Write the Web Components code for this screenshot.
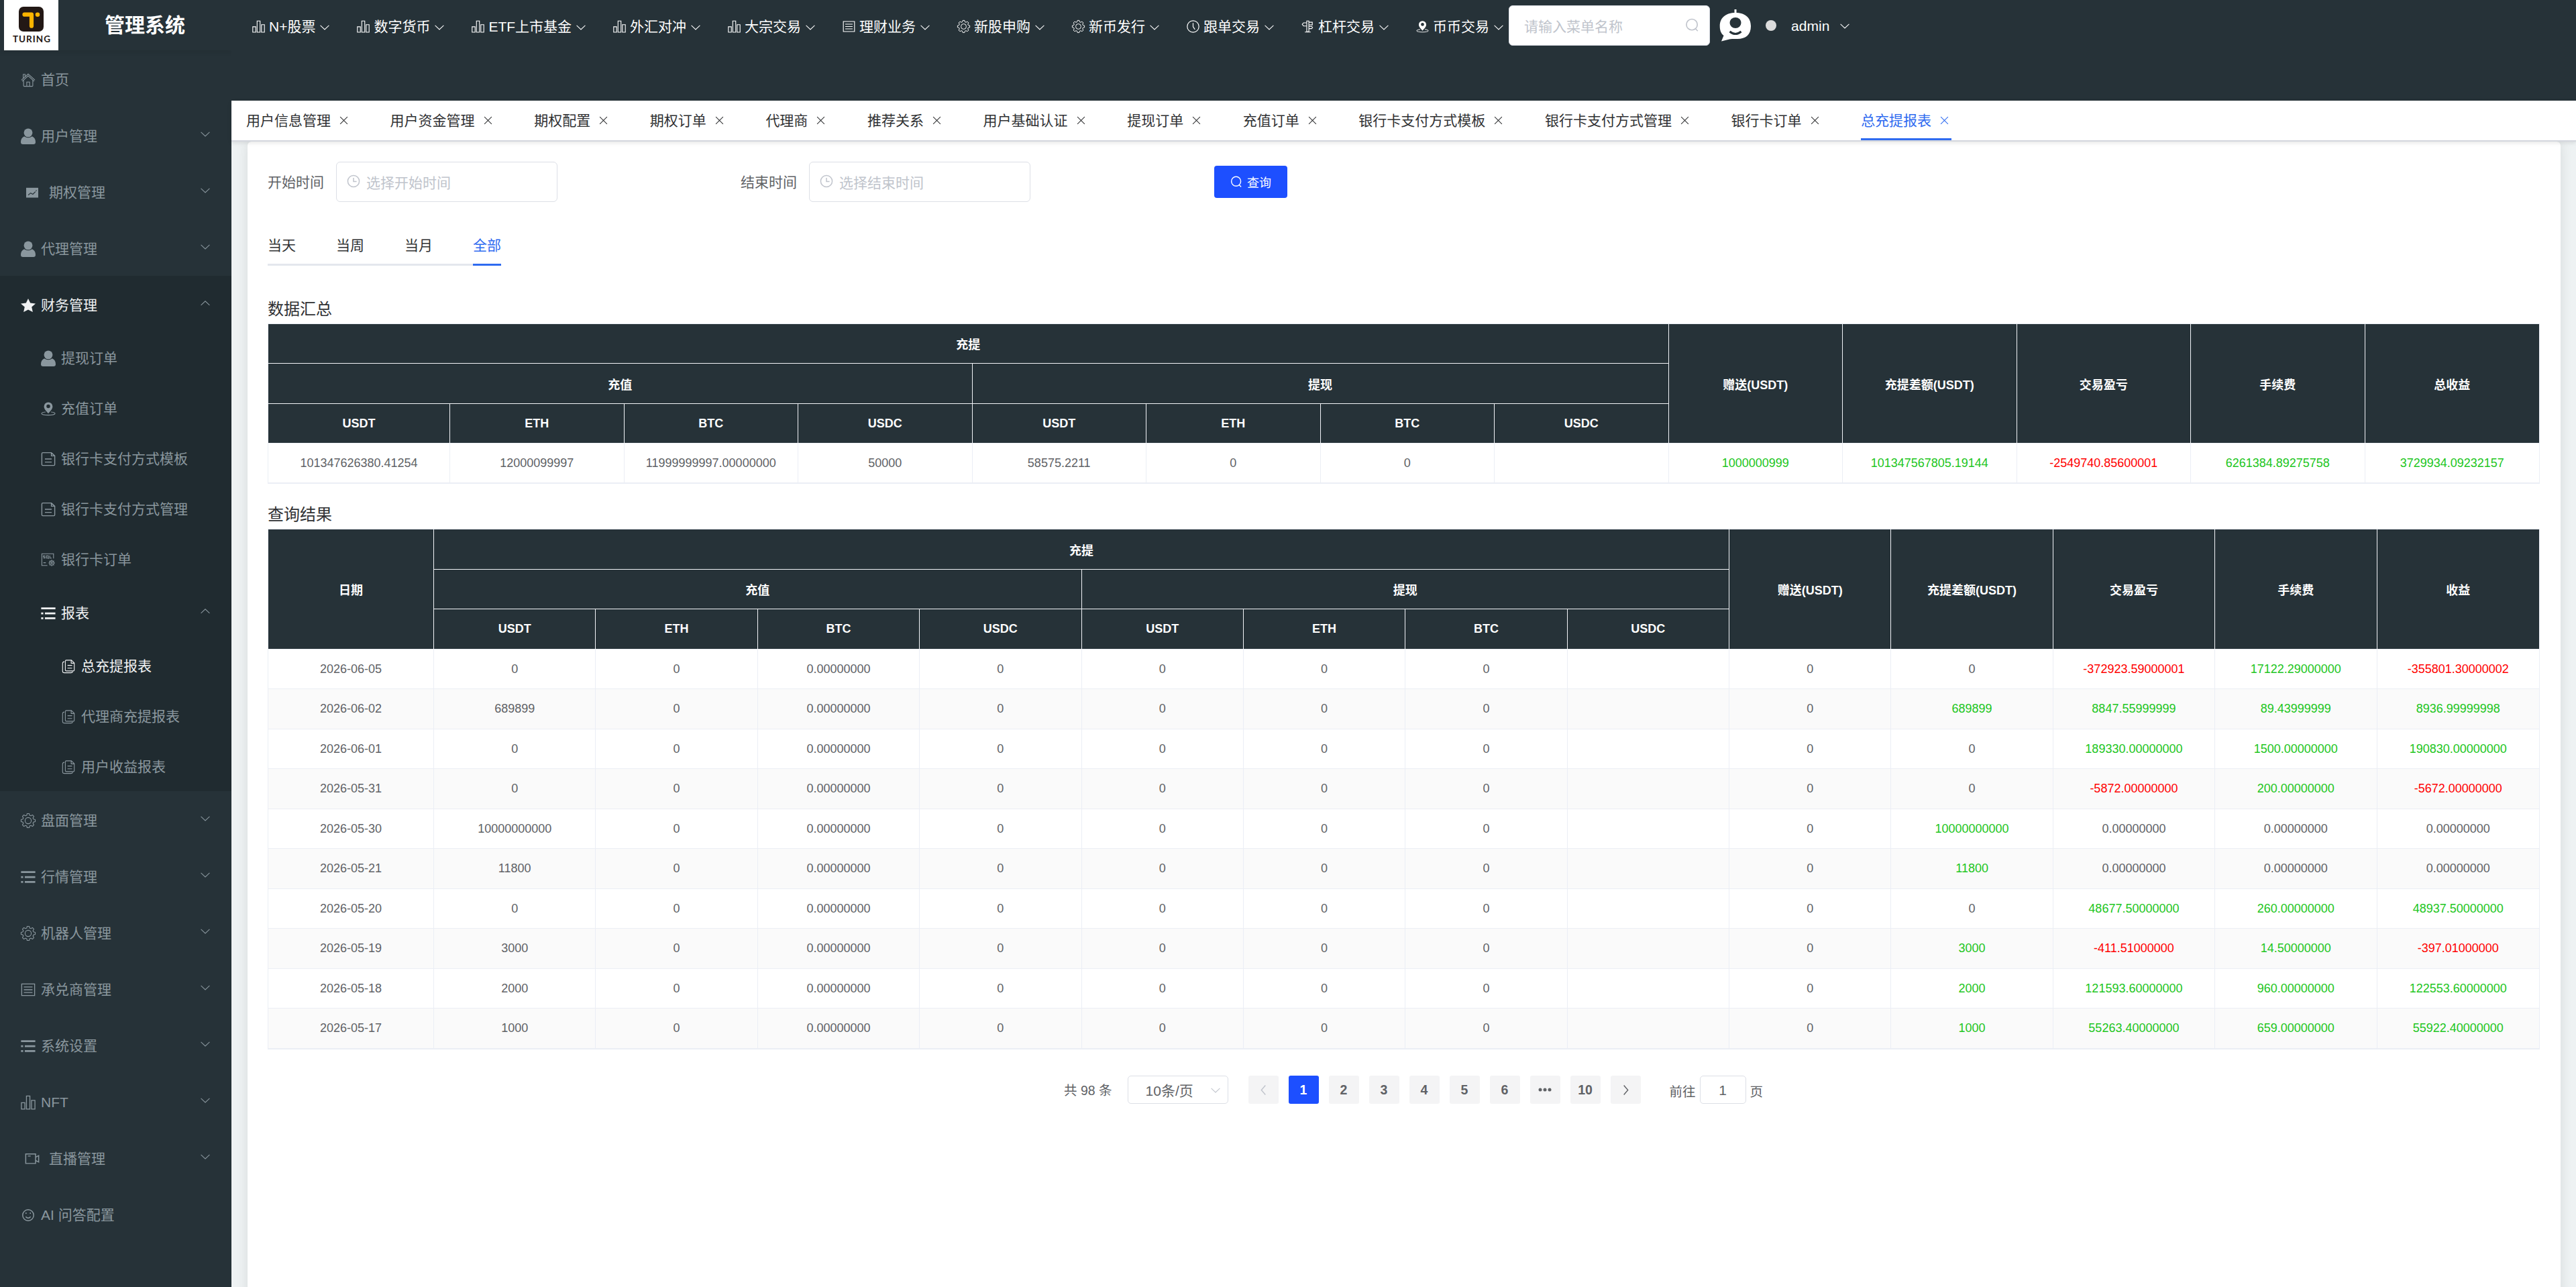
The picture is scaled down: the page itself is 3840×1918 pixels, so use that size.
<!DOCTYPE html>
<html lang="zh-CN">
<head>
<meta charset="utf-8">
<title>管理系统</title>
<style>
  body {
    margin: 0;
    width: 3840px;
    height: 1918px;
    overflow: hidden;
    font-family: "Liberation Sans", "Noto Sans CJK SC", sans-serif;
    font-size: 21px;
    background: #eef2f3;
  }
</style>
</head>
<body>
<admin-layout>
  <side-bar slot="sidebar"></side-bar>
  <top-bar slot="header"></top-bar>
  <page-tabs slot="tabs"></page-tabs>
  <report-page></report-page>
</admin-layout>

<script>
const ICONS = {
  house: `<path d="M1 12.500 12 2.500 23 12.500M2.300 14.300 12 5.500l9.700 8.800M4.500 12.800v8.700q0 1 1 1h13q1 0 1-1v-8.700M9.700 22.500v-7h4.600v7M4 9.500V3h3v3.300"/>`,
  user: `<g fill="currentColor" stroke="none"><ellipse cx="12" cy="6.400" rx="7" ry="7"/><path d="M5.500 12.300Q12 16.500 18.500 12.300Q24 15 24 21.500Q24 25 20.500 25h-17Q0 25 0 21.500Q0 15 5.500 12.300z"/></g>`,
  star: `<path fill="currentColor" stroke="none" d="M12 1l3.500 7.200 8.500 1-6.300 5.500 1.800 8.300-7.500-4-7.500 4 1.800-8.300L0 9.200l8.500-1z"/>`,
  chart: `<path fill="currentColor" stroke="none" d="M2.200 4.200h19.600v16H2.200z"/><path stroke="#263238" stroke-width="1.300" d="M5.500 16l4-3.300 3.500 2 4.300-4.200M17.800 8.800h1.500"/>`,
  list: `<path stroke-width="3" d="M.4 4h23.200M6.500 12h17M6.500 20h17M.4 12h3.400M.4 20h3.400"/>`,
  pin: `<path fill="currentColor" stroke="none" fill-rule="evenodd" d="M12 1.500a7 7 0 0 1 7 7c0 4.500-4 7.500-7 11.500-3-4-7-7-7-11.500a7 7 0 0 1 7-7zm0 3.700a3 3 0 1 0 0 6 3 3 0 0 0 0-6z"/><path d="M7.500 17.500c-4 .5-6.500 1.500-6.500 2.500 0 1.500 5 2.500 11 2.500s11-1 11-2.500c0-1-2.500-2-6.500-2.500"/>`,
  doc: `<path stroke-width="1.500" d="M3 1.800h14L22.500 7v14q0 1.500-1.500 1.500H3Q1.500 22.500 1.500 21V3.300Q1.500 1.800 3 1.800zM17 1.800V7h5.500M6.500 12h11M6.500 17h11"/>`,
  sql: `<path d="M20.500 10V2.500h-19v19h9M4 9.500h2.500V7.700H4V5.800h3M9 5.800h3v3.700H9zM11.500 9l1.500 1.500M14.500 5.500v4h3M4 17h4"/><circle cx="17.500" cy="17.500" r="3.500"/><circle cx="17.500" cy="17.500" r="1.300"/><path d="M17.500 12.300V14M17.500 21v1.700M12.500 17.500H14M21 17.500h1.700M13.900 13.900l1.200 1.200M20 20l1.200 1.200M13.900 21.100l1.200-1.200M20 15l1.200-1.200"/>`,
  copy: `<path d="M8.500 2h8.300l4.700 4.500V18q0 1.500-1.500 1.500H8.500Q7 19.500 7 18V3.500Q7 2 8.500 2zM16.500 2v5h5M10.500 10.500h7.500M10.500 15h7.500M5.500 4.500Q2.500 4.500 2.500 7v12.500q0 3 3 3H16q2.500 0 3-2"/>`,
  gear: `<g stroke-linejoin="round"><circle cx="12" cy="12" r="5"/><path d="M10.300.5h3.400l.6 2.800 2.100.9 2.500-1.500 2.400 2.400-1.500 2.500.9 2 2.800.7v3.400l-2.800.6-.9 2.100 1.500 2.500-2.400 2.400-2.500-1.500-2.100.9-.6 2.800h-3.400l-.6-2.800-2.100-.9-2.500 1.500-2.400-2.400 1.500-2.500-.9-2.100-2.800-.6v-3.400l2.800-.7.9-2-1.500-2.500 2.400-2.400 2.500 1.500 2.100-.9z"/></g>`,
  bars: `<path stroke-width="1.400" d="M1 12.500h5.600v10.200H1zM9.200 1.500h5.600v21.200H9.200zM17.400 8.500H23v14.200h-5.600z"/>`,
  memo: `<path stroke-width="1.400" d="M1.500 2.500h21v19h-21zM5 7.500h14M5 12h14M5 16.500h14"/>`,
  video: `<path stroke-width="1.600" d="M1.500 4h16v15.500h-16zM5 7.500h4.500M17.500 9.500l5-2.800v10.600l-5-2.800z"/>`,
  smile: `<circle cx="12" cy="12" r="9" stroke-width="1.600"/><path stroke-width="1.600" d="M8 14.500q4 4.500 8 0M8.500 7.500v2.400M15.500 7.500v2.400"/>`,
  clock: `<circle cx="12" cy="12" r="11" stroke-width="1.500"/><path stroke-width="1.500" d="M12 5.500v7l3.500 5"/>`,
  time: `<circle cx="12" cy="12" r="10.300" stroke-width="1.800"/><path stroke-width="1.800" d="M12 6v6.500h5.500"/>`,
  sign: `<path stroke-width="1.400" d="M10 1.500h4v20.500h-4zM10 5H4L1.500 8 4 11h6M14 4h6.500v5H14M14 12h5.500l1.500 2-1.500 2H14M6.500 22.500h11"/>`,
  search: `<circle cx="11.500" cy="11" r="9.300" stroke-width="1.900"/><path stroke-width="1.900" d="M17.500 18l4 4"/>`,
  down: `<path stroke-width="1.800" d="M1 6.500l11 10.500 11-10.500"/>`,
  up: `<path stroke-width="1.800" d="M1 17l11-10.500 11 10.500"/>`,
  left: `<path stroke-width="2" d="M16 2L7.500 12 16 22"/>`,
  right: `<path stroke-width="2" d="M8 2l8.500 10L8 22"/>`,
  close: `<path stroke-width="1.900" d="M2 2l20 20M22 2L2 22"/>`,
};

class AppIcon extends HTMLElement {
  constructor() {
    super();
    this.attachShadow({ mode: "open" });
  }

  connectedCallback() {
    this.shadowRoot.innerHTML = `
      <style>
        :host { display: inline-block; flex: none; width: 22px; height: 22px; }
        svg { display: block; width: 100%; height: 100%; overflow: visible; fill: none; stroke: currentColor; stroke-width: 1.2; }
      </style>
      <svg viewBox="0 0 24 24">${ICONS[this.getAttribute("name")] || ""}</svg>`;
  }
}
customElements.define("app-icon", AppIcon);

class AdminLayout extends HTMLElement {
  constructor() {
    super();
    this.attachShadow({ mode: "open" }).innerHTML = `
      <style>
        :host { display: flex; width: 3840px; height: 1918px; }
        .main { flex: 1; min-width: 0; display: flex; flex-direction: column; }
      </style>
      <slot name="sidebar"></slot>
      <div class="main">
        <slot name="header"></slot>
        <slot name="tabs"></slot>
        <slot></slot>
      </div>`;
  }
}
customElements.define("admin-layout", AdminLayout);

// One row of the side menu; level sets the indent, open/active the white text
class MenuItem extends HTMLElement {
  constructor() {
    super();
    this.attachShadow({ mode: "open" });
  }

  connectedCallback() {
    const arrow = this.getAttribute("arrow");
    this.shadowRoot.innerHTML = `
      <style>
        :host {
          display: flex;
          align-items: center;
          height: 84px;
          padding: 4px 32px 0 31px;
          box-sizing: border-box;
          color: #8a979e;
          white-space: nowrap;
        }
        :host([level="2"]) { padding-left: 61px; }
        :host([level="3"]) { padding-left: 91px; }
        :host([leaf]) { height: 75px; padding-top: 3px; }
        :host([active]) { color: #f0f2f3; }
        :host([wide]) { padding-left: 37px; }
        :host([wide]) .icon { margin-right: 14px; }
        .icon { margin-right: 8px; }
        .label { flex: 1; line-height: 30px; }
        .arrow { width: 14px; height: 14px; color: #8a979e; margin-bottom: 7px; }
      </style>
      <app-icon class="icon" name="${this.getAttribute("icon")}"></app-icon>
      <span class="label"><slot></slot></span>
      ${arrow ? `<app-icon class="arrow" name="${arrow}"></app-icon>` : ""}`;
  }
}
customElements.define("menu-item", MenuItem);

class SideBar extends HTMLElement {
  constructor() {
    super();
    this.attachShadow({ mode: "open" }).innerHTML = `
      <style>
        :host { display: block; width: 345px; flex: none; height: 1918px; background: #263238; }
        .brand {
          display: flex;
          align-items: center;
          height: 75px;
          padding-left: 6px;
          box-shadow: 0 5px 5px rgba(0, 0, 0, 0.06);
        }
        .logo {
          width: 81px;
          height: 75px;
          background: #fff;
          display: flex;
          flex-direction: column;
          align-items: center;
          color: #231815;
          font: 700 13.5px/15px Lato, "Liberation Sans", sans-serif;
          letter-spacing: 1px;
        }
        .logo svg { display: block; margin: 10px 0 4px; }
        .logo span { margin-left: 2px; }
        h1 { margin: 0 0 0 69px; font-size: 30px; line-height: 40px; color: #fff; }
        .opened { background: #202b30; }
      </style>
      <div class="brand">
        <div class="logo">
          <svg width="37" height="37" viewBox="0 0 37 37">
            <rect width="37" height="37" rx="7" fill="#231815"/>
            <path d="M8.500 11.700H19V28.700" fill="none" stroke="#ffb400" stroke-width="6.200" stroke-linecap="round" stroke-linejoin="round"/>
            <circle cx="28" cy="11.700" r="3.300" fill="#ffb400"/>
          </svg>
          <span>TURING</span>
        </div>
        <h1>管理系统</h1>
      </div>
      <menu-item icon="house">首页</menu-item>
      <menu-item icon="user" arrow="down">用户管理</menu-item>
      <menu-item icon="chart" arrow="down" wide>期权管理</menu-item>
      <menu-item icon="user" arrow="down">代理管理</menu-item>
      <div class="opened">
        <menu-item icon="star" arrow="up" active>财务管理</menu-item>
        <menu-item level="2" leaf icon="user">提现订单</menu-item>
        <menu-item level="2" leaf icon="pin">充值订单</menu-item>
        <menu-item level="2" leaf icon="doc">银行卡支付方式模板</menu-item>
        <menu-item level="2" leaf icon="doc">银行卡支付方式管理</menu-item>
        <menu-item level="2" leaf icon="sql">银行卡订单</menu-item>
        <menu-item level="2" icon="list" arrow="up" active>报表</menu-item>
        <menu-item level="3" leaf icon="copy" active>总充提报表</menu-item>
        <menu-item level="3" leaf icon="copy">代理商充提报表</menu-item>
        <menu-item level="3" leaf icon="copy">用户收益报表</menu-item>
      </div>
      <menu-item icon="gear" arrow="down">盘面管理</menu-item>
      <menu-item icon="list" arrow="down">行情管理</menu-item>
      <menu-item icon="gear" arrow="down">机器人管理</menu-item>
      <menu-item icon="memo" arrow="down">承兑商管理</menu-item>
      <menu-item icon="list" arrow="down">系统设置</menu-item>
      <menu-item icon="bars" arrow="down">NFT</menu-item>
      <menu-item icon="video" arrow="down" wide>直播管理</menu-item>
      <menu-item icon="smile">AI 问答配置</menu-item>`;
  }
}
customElements.define("side-bar", SideBar);

const TOP_MENU = [
  ["bars", "N+股票"],
  ["bars", "数字货币"],
  ["bars", "ETF上市基金"],
  ["bars", "外汇对冲"],
  ["bars", "大宗交易"],
  ["memo", "理财业务"],
  ["gear", "新股申购"],
  ["gear", "新币发行"],
  ["clock", "跟单交易"],
  ["sign", "杠杆交易"],
  ["pin", "币币交易"],
];

class TopBar extends HTMLElement {
  constructor() {
    super();
    this.attachShadow({ mode: "open" }).innerHTML = `
      <style>
        :host { display: block; height: 150px; background: #263238; color: #fff; }
        .row { display: flex; align-items: center; height: 76px; padding-left: 31px; white-space: nowrap; }
        .item { display: flex; align-items: center; margin: 3px 41px 0 0; line-height: 30px; }
        .item:last-of-type { margin-right: 0; }
        .item app-icon { width: 19px; height: 19px; margin-right: 6px; }
        .item .arrow, .arrow { width: 14px; height: 14px; margin: 2px 0 0 7px; }
        .search {
          display: flex;
          align-items: center;
          justify-content: space-between;
          width: 300px;
          height: 60px;
          margin-left: 8px;
          padding: 0 15px 0 22px;
          box-sizing: border-box;
          border: 1px solid #dcdfe6;
          border-radius: 6px;
          background: #fff;
          color: #c0c4cc;
        }
        .search app-icon { width: 21px; height: 21px; margin-top: -2px; }
        .robot { margin-left: 14px; display: block; }
        .dot { width: 16px; height: 16px; border-radius: 50%; background: #dcdcdc; margin: 0 22px 0 21px; }
        .name { line-height: 30px; padding-top: 1px; }
        .name + .arrow { margin: 2px 0 0 16px; }
      </style>
      <div class="row">
        ${TOP_MENU.map(([icon, text]) => `<div class="item"><app-icon name="${icon}"></app-icon><span>${text}</span><app-icon class="arrow" name="down"></app-icon></div>`).join("")}
        <section class="search"><span>请输入菜单名称</span><app-icon name="search"></app-icon></section>
        <svg class="robot" width="48" height="48" viewBox="0 0 48 48">
          <path d="M22.500 0h3v6h-3z" fill="#fff"/>
          <path d="M24 5c14 0 23 7 23 20S39 44 27 44c-6 0-9 0-12 .5L3 47.500l3.500-8.500C2.500 36 .7 31 .7 25 .7 12 10 5 24 5z" fill="#fff"/>
          <ellipse cx="24" cy="20" rx="8.500" ry="8" fill="#263238"/>
          <path d="M15.500 33q8.500 7 17 0" fill="none" stroke="#263238" stroke-width="3"/>
        </svg>
        <i class="dot"></i>
        <span class="name">admin</span>
        <app-icon class="arrow" name="down"></app-icon>
      </div>`;
  }
}
customElements.define("top-bar", TopBar);

const TABS = [
  "用户信息管理", "用户资金管理", "期权配置", "期权订单", "代理商", "推荐关系", "用户基础认证",
  "提现订单", "充值订单", "银行卡支付方式模板", "银行卡支付方式管理", "银行卡订单", "总充提报表",
];

class PageTabs extends HTMLElement {
  constructor() {
    super();
    this.attachShadow({ mode: "open" }).innerHTML = `
      <style>
        :host {
          display: flex;
          gap: 58.600px;
          height: 61px;
          box-sizing: border-box;
          padding-left: 22px;
          position: relative;
          z-index: 1;
          background: #fff;
          border-bottom: 2px solid #d4d7de;
          box-shadow: 0 2px 6px rgba(0, 0, 0, 0.1);
          color: #303133;
          white-space: nowrap;
        }
        .tab { display: flex; align-items: center; height: 59px; box-sizing: border-box; border-bottom: 3px solid transparent; }
        .tab app-icon { width: 13px; height: 13px; margin: 3px 4px 0 13px; }
        .active { color: #2f6bf0; border-color: #2f6bf0; }
      </style>
      ${TABS.map((t, i) => `<div class="tab${i === TABS.length - 1 ? " active" : ""}"><span>${t}</span><app-icon name="close"></app-icon></div>`).join("")}`;
  }
}
customElements.define("page-tabs", PageTabs);

const TABLE_STYLE = `
  :host { display: block; }
  h2 { margin: 0; font-size: 24px; font-weight: 400; line-height: 36px; color: #303133; }
  .wrap { border: 1px solid #ebeef5; width: 3387px; box-sizing: border-box; margin-top: 3px; }
  table { width: 100%; table-layout: fixed; border-collapse: separate; border-spacing: 0; font-size: 18px; text-align: center; color: #606266; }
  th, td { height: 60px; padding: 0; box-sizing: border-box; border: 0 solid #ebeef5; border-width: 0 1px 1px 0; }
  th:last-child:not(.in), td:last-child { border-right: 0; }
  th { background: #263238; color: #fff; border-color: #f2f4f8; }
  tr.s > * { height: 59px; }
  .up { color: #21c621; }
  .down { color: #f00; }
`;

const COINS = ["USDT", "ETH", "BTC", "USDC", "USDT", "ETH", "BTC", "USDC"];

function cell(v) {
  return v[0] === "+" ? `<td class="up">${v.slice(1)}</td>` : v[0] === "-" ? `<td class="down">${v}</td>` : `<td>${v}</td>`;
}

function head(first, last, shorts) {
  const c = (i) => (shorts[i] ? ' class="s"' : "");
  return `<thead>
    <tr${c(0)}>${first ? `<th rowspan="3">${first}</th>` : ""}<th colspan="8">充提</th>
      <th rowspan="3">赠送(USDT)</th><th rowspan="3">充提差额(USDT)</th><th rowspan="3">交易盈亏</th><th rowspan="3">手续费</th><th rowspan="3">${last}</th></tr>
    <tr${c(1)}><th colspan="4">充值</th><th class="in" colspan="4">提现</th></tr>
    <tr${c(2)}>${COINS.map((n) => `<th class="in">${n}</th>`).join("")}</tr>
  </thead>`;
}

class SummaryTable extends HTMLElement {
  constructor() {
    super();
    const row = ["101347626380.41254", "12000099997", "11999999997.00000000", "50000", "58575.2211", "0", "0", "",
      "+1000000999", "+101347567805.19144", "-2549740.85600001", "+6261384.89275758", "+3729934.09232157"];
    this.attachShadow({ mode: "open" }).innerHTML = `
      <style>${TABLE_STYLE}</style>
      <h2>数据汇总</h2>
      <div class="wrap"><table>
        <colgroup><col style="width:271px">${"<col>".repeat(12)}</colgroup>
        ${head("", "总收益", [1, 0, 1])}
        <tbody><tr class="s">${row.map(cell).join("")}</tr></tbody>
      </table></div>`;
  }
}
customElements.define("summary-table", SummaryTable);

// date, USDT recharge, difference, profit, fee, income
const RESULTS = [
  ["2026-06-05", "0", "0", "-372923.59000001", "+17122.29000000", "-355801.30000002"],
  ["2026-06-02", "689899", "+689899", "+8847.55999999", "+89.43999999", "+8936.99999998"],
  ["2026-06-01", "0", "0", "+189330.00000000", "+1500.00000000", "+190830.00000000"],
  ["2026-05-31", "0", "0", "-5872.00000000", "+200.00000000", "-5672.00000000"],
  ["2026-05-30", "10000000000", "+10000000000", "0.00000000", "0.00000000", "0.00000000"],
  ["2026-05-21", "11800", "+11800", "0.00000000", "0.00000000", "0.00000000"],
  ["2026-05-20", "0", "0", "+48677.50000000", "+260.00000000", "+48937.50000000"],
  ["2026-05-19", "3000", "+3000", "-411.51000000", "+14.50000000", "-397.01000000"],
  ["2026-05-18", "2000", "+2000", "+121593.60000000", "+960.00000000", "+122553.60000000"],
  ["2026-05-17", "1000", "+1000", "+55263.40000000", "+659.00000000", "+55922.40000000"],
];

class ResultTable extends HTMLElement {
  constructor() {
    super();
    const rows = RESULTS.map(([date, usdt, ...rest], i) => {
      const values = [date, usdt, "0", "0.00000000", "0", "0", "0", "0", "", "0", ...rest];
      return `<tr class="${i % 2 ? "even" : "s"}">${values.map(cell).join("")}</tr>`;
    }).join("");
    this.attachShadow({ mode: "open" }).innerHTML = `
      <style>
        ${TABLE_STYLE}
        .even td { background: #fafafa; }
      </style>
      <h2>查询结果</h2>
      <div class="wrap"><table>
        <colgroup><col style="width:247px">${"<col>".repeat(13)}</colgroup>
        ${head("日期", "收益", [0, 1, 0])}
        <tbody>${rows}</tbody>
      </table></div>`;
  }
}
customElements.define("result-table", ResultTable);

class DateField extends HTMLElement {
  constructor() {
    super();
    this.attachShadow({ mode: "open" });
  }

  connectedCallback() {
    this.shadowRoot.innerHTML = `
      <style>
        :host { display: flex; align-items: center; color: #606266; white-space: nowrap; }
        label { padding-bottom: 3px; }
        .box {
          display: flex;
          align-items: center;
          width: 330px;
          height: 60px;
          box-sizing: border-box;
          margin-left: 18px;
          padding-left: 15px;
          border: 1px solid #dcdfe6;
          border-radius: 6px;
          color: #c0c4cc;
        }
        .box app-icon { width: 20px; height: 20px; margin: -2px 9px 0 0; }
      </style>
      <label><slot></slot></label>
      <div class="box"><app-icon name="time"></app-icon><span>${this.getAttribute("placeholder")}</span></div>`;
  }
}
customElements.define("date-field", DateField);

class PageNav extends HTMLElement {
  constructor() {
    super();
    this.attachShadow({ mode: "open" }).innerHTML = `
      <style>
        :host { display: flex; align-items: center; height: 42px; font-size: 19.5px; color: #606266; white-space: nowrap; }
        .total { padding-bottom: 2px; }
        .size {
          display: flex;
          align-items: center;
          justify-content: space-between;
          width: 150px;
          height: 42px;
          box-sizing: border-box;
          margin: 0 30px 0 23px;
          padding: 0 11px 0 26px;
          border: 1px solid #dcdfe6;
          border-radius: 5px;
          font-size: 21px;
        }
        .size app-icon { width: 14px; height: 14px; color: #c0c4cc; margin-top: 2px; }
        .pages { display: flex; gap: 15px; font-weight: 700; }
        .pages > * {
          display: flex;
          align-items: center;
          justify-content: center;
          width: 45px;
          height: 42px;
          border-radius: 3px;
          background: #f4f4f5;
        }
        .pages app-icon { width: 17px; height: 17px; }
        .on { background: #1d4fff; color: #fff; }
        .off { color: #c0c4cc; }
        .jump { display: flex; align-items: center; margin-left: 43px; }
        .jump span { padding-top: 2px; }
        .jump b {
          width: 69px;
          height: 42px;
          line-height: 42px;
          box-sizing: border-box;
          margin: 0 6px;
          border: 1px solid #dcdfe6;
          border-radius: 5px;
          text-align: center;
          font-weight: 400;
          font-size: 21px;
        }
      </style>
      <span class="total">共 98 条</span>
      <div class="size"><span>10条/页</span><app-icon name="down"></app-icon></div>
      <div class="pages">
        <div class="off"><app-icon name="left"></app-icon></div>
        <div class="on">1</div><div>2</div><div>3</div><div>4</div><div>5</div><div>6</div>
        <div>
          <svg width="20" height="6" viewBox="0 0 20 6" fill="#606266"><circle cx="3" cy="3" r="2.500"/><circle cx="10" cy="3" r="2.500"/><circle cx="17" cy="3" r="2.500"/></svg>
        </div>
        <div>10</div>
        <div><app-icon name="right"></app-icon></div>
      </div>
      <div class="jump"><span>前往</span><b>1</b><span>页</span></div>`;
  }
}
customElements.define("page-nav", PageNav);

class ReportPage extends HTMLElement {
  constructor() {
    super();
    this.attachShadow({ mode: "open" }).innerHTML = `
      <style>
        :host { display: block; flex: 1; padding: 0 23px 0 24px; background: #eef2f3; overflow: hidden; }
        .card {
          height: 1760px;
          padding: 30px 0 0 30px;
          box-sizing: border-box;
          border-radius: 6px;
          background: #fff;
          box-shadow: 0 0 18px rgba(0, 0, 0, 0.1);
        }
        .form { display: flex; align-items: center; height: 60px; }
        .form date-field { width: 705px; }
        button {
          display: flex;
          align-items: center;
          justify-content: center;
          width: 109px;
          height: 48px;
          margin: 0 0 0 1px;
          padding: 0;
          border: 0;
          border-radius: 4px;
          background: #1d4fff;
          color: #fff;
          font: 18px "Liberation Sans", "Noto Sans CJK SC", sans-serif;
        }
        button app-icon { width: 18px; height: 18px; margin-right: 7px; }
        .range { display: flex; width: max-content; margin-top: 38px; color: #303133; line-height: 54px; }
        .range span { width: 102px; height: 57px; box-sizing: border-box; border-bottom: 3px solid #e4e7ed; }
        .range .on { width: 42px; color: #2f6bf0; border-color: #2f6bf0; }
        summary-table { margin-top: 47px; }
        result-table { margin-top: 28px; }
        page-nav { margin: 39px 0 0 1187px; }
      </style>
      <div class="card">
        <div class="form">
          <date-field placeholder="选择开始时间">开始时间</date-field>
          <date-field placeholder="选择结束时间">结束时间</date-field>
          <button><app-icon name="search"></app-icon>查询</button>
        </div>
        <div class="range"><span>当天</span><span>当周</span><span>当月</span><span class="on">全部</span></div>
        <summary-table></summary-table>
        <result-table></result-table>
        <page-nav></page-nav>
      </div>`;
  }
}
customElements.define("report-page", ReportPage);
</script>
</body>
</html>
